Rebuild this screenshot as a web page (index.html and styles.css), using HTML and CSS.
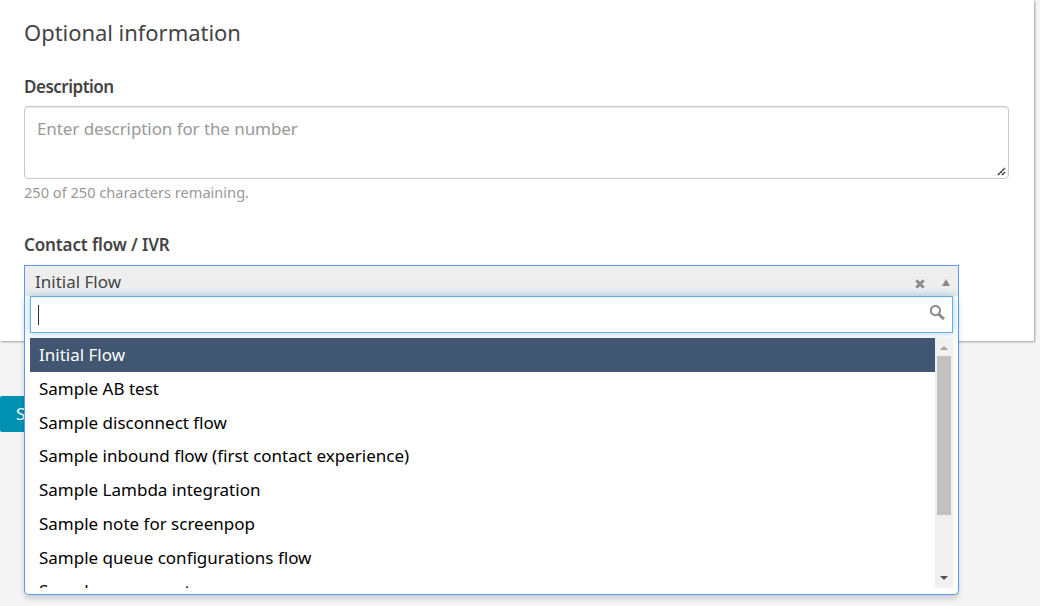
FILE: index.html
```html
<!DOCTYPE html>
<html lang="en">
<head>
<meta charset="utf-8">
<title>Optional information</title>
<link rel="stylesheet" href="styles.css">
</head>
<body>
<main class="page">
  <section class="card">
    <h2 class="card-title">Optional information</h2>
    <label class="label">Description</label>
    <div class="textarea">
      <span class="placeholder">Enter description for the number</span>
      <svg class="grip" width="9" height="9" viewBox="0 0 9 9"><path d="M1 8 8 1M5 8l3-3" stroke="#444" stroke-width="1.7" stroke-dasharray="2.6 .4" fill="none"/></svg>
    </div>
    <p class="hint">250 of 250 characters remaining.</p>
    <label class="label label-flow">Contact flow / IVR</label>
    <div class="select">
      <div class="select-head">
        <span class="select-value">Initial Flow</span>
        <svg class="clear" width="10" height="10" viewBox="0 0 10 10"><path d="M1.3 1.3 8.7 8.7M8.7 1.3 1.3 8.7" stroke="#8c8c8c" stroke-width="3"/></svg>
        <svg class="arrow" width="8" height="7" viewBox="0 0 8 7"><path d="M4 0 8 7H0z" fill="#8a8a8a"/></svg>
      </div>
      <div class="dropdown">
        <div class="search">
          <span class="caret"></span>
          <svg class="magnifier" width="17" height="17" viewBox="0 0 17 17"><circle cx="6.4" cy="5.6" r="4.6" fill="none" stroke="#8c8c8c" stroke-width="2.1"/><path d="m9.8 9.2 5.2 5.1" stroke="#8c8c8c" stroke-width="3"/></svg>
        </div>
        <div class="results">
          <ul class="options">
            <li class="option selected">Initial Flow</li>
            <li class="option">Sample AB test</li>
            <li class="option">Sample disconnect flow</li>
            <li class="option">Sample inbound flow (first contact experience)</li>
            <li class="option">Sample Lambda integration</li>
            <li class="option">Sample note for screenpop</li>
            <li class="option">Sample queue configurations flow</li>
            <li class="option">Sample queue customer</li>
          </ul>
          <div class="scrollbar">
            <svg width="8" height="4" viewBox="0 0 8 4"><path d="M4 0 8 4H0z" fill="#a3a3a3"/></svg>
            <div class="thumb"></div>
            <svg width="8" height="4" viewBox="0 0 8 4"><path d="M0 0h8L4 4z" fill="#505050"/></svg>
          </div>
        </div>
      </div>
    </div>
  </section>
  <button class="save">Save</button>
</main>
</body>
</html>
```
FILE: styles.css
```css
* { box-sizing: border-box; }
body {
  margin: 0;
  background: #f4f4f4;
  color: #444;
  font-family: "Noto Sans", "Open Sans", sans-serif;
  font-size: 17px;
}
.page { height: 606px; overflow: hidden; }
.card {
  width: 1034px;
  height: 341px;
  padding: 17px 25px 0 24px;
  background: #fff;
  box-shadow: 1px 1px 2px rgba(0, 0, 0, .35);
}
.card-title {
  height: 30px;
  margin: 0 0 28px;
  font-size: 22px;
  line-height: 30px;
  font-weight: 400;
  letter-spacing: -.04px;
}
.label { display: block; height: 24px; line-height: 24px; font-weight: 600; letter-spacing: -.5px; }
.textarea {
  display: flex;
  justify-content: space-between;
  height: 73px;
  margin-top: 7px;
  padding: 10px 2px 2px 12px;
  border: 1px solid #c7c7c7;
  border-radius: 4px;
  box-shadow: inset 0 1px 1px rgba(0, 0, 0, .08);
}
.placeholder { color: #999; line-height: 24px; letter-spacing: -.08px; }
.grip { align-self: flex-end; }
.hint { margin: 2px 0 0; height: 23px; line-height: 22px; font-size: 14.6px; color: #999; }
.label-flow { margin-top: 29px; letter-spacing: -.12px; }
.select { position: relative; width: 935px; margin-top: 8px; }
.select-head {
  display: flex;
  align-items: center;
  height: 31px;
  padding: 2px 8px 0 10px;
  background: linear-gradient(#eee 80%, #e8e8e8);
  border: 1px solid #5897fb;
  border-bottom: 0;
}
.select-value { flex: 1; line-height: 28px; }
.clear { margin: 4px 17px 0 0; }
.dropdown {
  position: absolute;
  z-index: 2;
  top: 31px;
  left: 0;
  width: 935px;
  height: 299px;
  padding: 0 5px 6px;
  background: #fff;
  border: 1px solid #5897fb;
  border-top: 0;
  border-radius: 0 0 5px 5px;
  box-shadow: 0 4px 5px rgba(0, 0, 0, .15);
}
.search {
  display: flex;
  justify-content: space-between;
  height: 37px;
  padding: 8px 6px 0 7px;
  background: #fff;
  border: 1px solid #66afe9;
  box-shadow: inset 0 1px 1px rgba(0, 0, 0, .075), 0 0 8px rgba(102, 175, 233, .6);
}
.caret { width: 1px; height: 20px; background: #333; }
.results { display: flex; height: 250px; margin-top: 5px; overflow: hidden; }
.options { flex: 1; margin: 0; padding: 0; list-style: none; color: #000; }
.option { height: 33.75px; padding-left: 9px; line-height: 33.75px; white-space: nowrap; }
.selected { background: #415670; color: #fff; }
.scrollbar {
  display: flex;
  flex-direction: column;
  align-items: center;
  width: 18px;
  padding: 8px 0;
  background: #f0f0f0;
}
.thumb { width: 14px; height: 159px; margin: 6px 0 61px; background: #c1c1c1; }
.save {
  display: block;
  width: 70px;
  height: 36px;
  margin-top: 55px;
  padding: 0 0 0 16px;
  border: 0;
  border-radius: 2px;
  background: #0091b3;
  color: #fff;
  font: 17px/36px "Noto Sans", sans-serif;
  text-align: left;
}
```
